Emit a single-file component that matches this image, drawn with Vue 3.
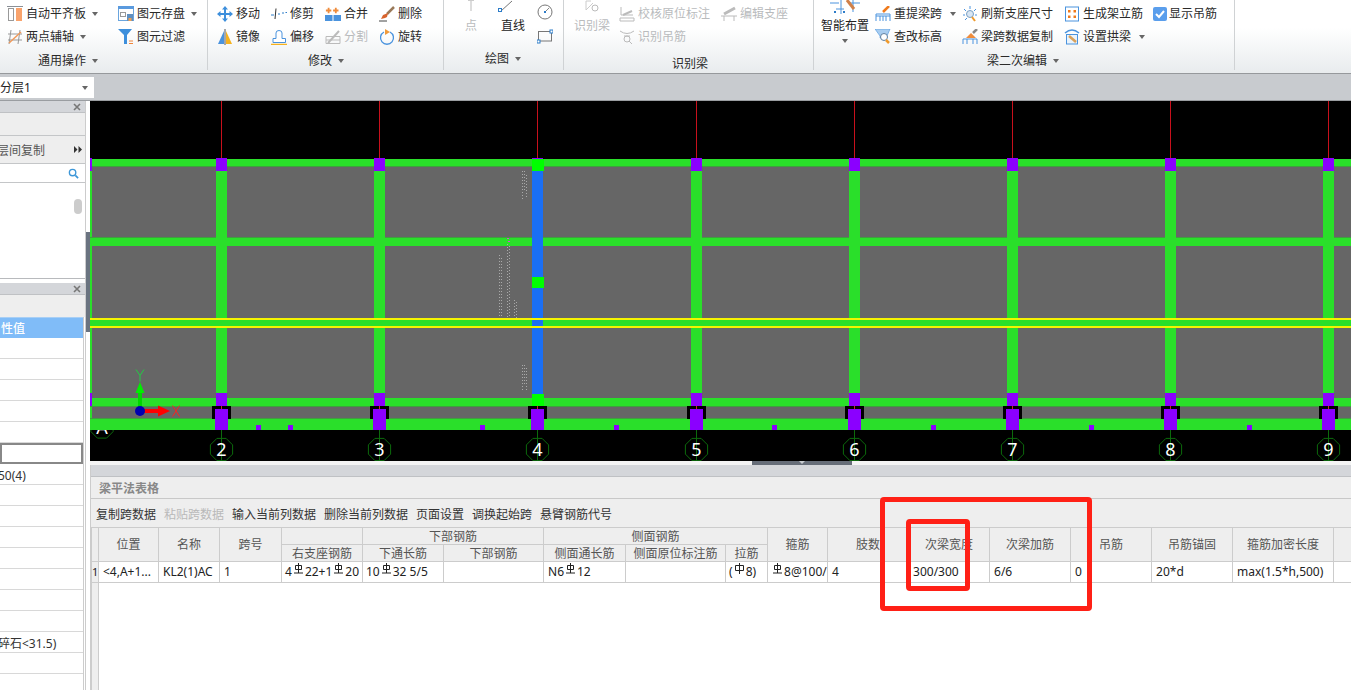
<script setup>
const colLefts = [216, 374, 532, 691, 849, 1007, 1165, 1323]
const specks = [256, 288, 480, 614, 772, 931, 1089, 1247]
const octagon = (cx, cy, r) =>
  Array.from({ length: 8 }, (_, i) => {
    const a = Math.PI / 8 + (i * Math.PI) / 4
    return `${(cx + r * Math.cos(a)).toFixed(1)},${(cy + r * Math.sin(a)).toFixed(1)}`
  }).join(' ')
const axes = colLefts.map((x, i) => ({ x: x + 5.5, label: i + 2, pts: octagon(x + 5.5, 449.5, 12) }))
const sideRows = [
  { t: '' }, { t: '' }, { t: '' }, { t: '' }, { t: '' },
  { t: '', sel: true }, { t: '50(4)' }, { t: '' }, { t: '' }, { t: '' }, { t: '' }, { t: '' }, { t: '' }, { t: '' },
  { t: '碎石<31.5)' }, { t: '' }, { t: '' }
]
const tableTools = [
  { t: '复制跨数据' }, { t: '粘贴跨数据', off: true }, { t: '输入当前列数据' }, { t: '删除当前列数据' },
  { t: '页面设置' }, { t: '调换起始跨' }, { t: '悬臂钢筋代号' }
]
const widths = [7, 60, 61, 62, 81, 81, 100, 82, 100, 42, 60, 81, 81, 81, 81, 81, 101, 18]
</script>

<template>
  <div class="app">
    <header class="ribbon">
      <section class="group g1">
        <div class="rows two">
          <div class="tool"><svg viewBox="0 0 16 16" class="ic"><path d="M0 .5h16" stroke="#8a8f96"/><rect x="1.500" y="2.500" width="5" height="12" fill="#fff" stroke="#999"/><rect x="9" y="2" width="6" height="13" fill="#f9a36c"/></svg><span>自动平齐板</span><i class="arrow"></i></div>
          <div class="tool"><svg viewBox="0 0 16 16" class="ic"><rect x=".5" y=".5" width="15" height="14" fill="#fff" stroke="#6aa5de"/><rect x="0" y="0" width="16" height="3" fill="#5a9ade"/><rect x="2.500" y="6.500" width="5" height="4" fill="none" stroke="#999"/><rect x="9" y="8" width="6" height="7" fill="#5f8fc0"/><rect x="10.500" y="12" width="3" height="3" fill="#f0a050"/></svg><span>图元存盘</span><i class="arrow"></i></div>
          <div class="tool"><svg viewBox="0 0 16 16" class="ic"><path d="M4 1L2 15M13 1L11 15M1 5h14M1 11h14" stroke="#999" fill="none"/><path d="M2 14L14 3" stroke="#f09a5a" stroke-width="1.500"/></svg><span>两点辅轴</span><i class="arrow"></i></div>
          <div class="tool"><svg viewBox="0 0 16 16" class="ic"><path d="M0 0h14L9 6v9l-3 0V6z" fill="#3d8fdc"/><path d="M11 12h4M11 14.500h4" stroke="#f0853a"/></svg><span>图元过滤</span></div>
        </div>
        <div class="label"><span>通用操作</span><i class="arrow"></i></div>
      </section>

      <section class="group g2">
        <div class="rows four">
          <div class="tool"><svg viewBox="0 0 16 16" class="ic"><path d="M8 0l3 3.500H9v3.500h3.500V5L16 8l-3.500 3V9H9v3.500h2L8 16l-3-3.500h2V9H3.500v2L0 8l3.500-3v2H7V3.500H5z" fill="#3d8fdc"/></svg><span>移动</span></div>
          <div class="tool"><svg viewBox="0 0 16 16" class="ic"><path d="M0 9h3M7 8h2M11 7h2M14.500 6.500H16" stroke="#2d7cc8" fill="none"/><path d="M5 2.500L4 13" stroke="#333" fill="none"/></svg><span>修剪</span></div>
          <div class="tool"><svg viewBox="0 0 16 16" class="ic"><rect x="0" y="9" width="7.500" height="6" fill="#4a93de"/><rect x="8.500" y="9" width="7.500" height="6" fill="#4a93de"/><path d="M3 2h2v2h2v2H5v2H3V6H1V4h2zM11 2h2v2h2v2h-2v2h-2V6H9V4h2z" fill="#ef8c3c" transform="scale(.9)"/></svg><span>合并</span></div>
          <div class="tool"><svg viewBox="0 0 16 16" class="ic"><path d="M15 1L8 8" stroke="#9a7a5a" stroke-width="2.500"/><path d="M9 7l-5 2-2 4 4-1 2-1z" fill="#d8632c"/><path d="M0 15h8" stroke="#444"/></svg><span>删除</span></div>
          <div class="tool"><svg viewBox="0 0 16 16" class="ic"><path d="M7 2L1 15h6z" fill="#4a93de"/><path d="M9 2l6 13H9z" fill="#f5b21f"/><path d="M8 0v16" stroke="#555"/></svg><span>镜像</span></div>
          <div class="tool"><svg viewBox="0 0 16 16" class="ic"><path d="M2 13.500V9.500h3V4Q5 1.500 8 1.500T11 4v5.500h3.500v4z" fill="#fff" stroke="#4a93de"/><path d="M0 15.500h16" stroke="#f5b21f" stroke-width="1.500"/></svg><span>偏移</span></div>
          <div class="tool off"><svg viewBox="0 0 16 16" class="ic"><path d="M1 7.500h14v7H1zM1 11h14" fill="none" stroke="#bbb"/><path d="M3 14L14 2" stroke="#bbb" stroke-width="2"/></svg><span>分割</span></div>
          <div class="tool"><svg viewBox="0 0 16 16" class="ic"><path d="M5 3A6.500 6.500 0 1 0 11 3" fill="none" stroke="#4a93de" stroke-width="1.300"/><path d="M6 0v6l5-3z" fill="#f09a3a"/></svg><span>旋转</span></div>
        </div>
        <div class="label"><span>修改</span><i class="arrow"></i></div>
      </section>

      <section class="group g3">
        <div class="draw">
          <div class="big off point"><svg viewBox="0 0 12 12" class="icb"><path d="M6 0v11" stroke="#bbb"/><path d="M3 .5h6" stroke="#ccc"/></svg><span>点</span></div>
          <div class="big line"><svg viewBox="0 0 24 14" class="icw"><path d="M3 11L14 1" stroke="#777" fill="none"/><rect x="0.500" y="8.500" width="3" height="3" fill="#fff" stroke="#2d7cc8"/></svg><span>直线</span></div>
          <div class="shapes">
            <svg viewBox="0 0 16 16" class="ic"><circle cx="8" cy="8" r="7" fill="none" stroke="#777"/><rect x="7" y="7" width="2" height="2" fill="#2d7cc8"/><path d="M9 7l3-3" stroke="#888"/></svg>
            <svg viewBox="0 0 16 16" class="ic"><rect x="1.500" y="3.500" width="13" height="9.500" fill="none" stroke="#777"/><rect x="13" y="2" width="3" height="3" fill="#fff" stroke="#2d7cc8"/><rect x="0" y="12" width="3" height="3" fill="#fff" stroke="#2d7cc8"/></svg>
          </div>
        </div>
        <div class="label"><span>绘图</span><i class="arrow"></i></div>
      </section>

      <section class="group g4">
        <div class="rec">
          <div class="big off recbig"><svg viewBox="0 0 16 12" class="icr"><path d="M2 10V1h5M2 10l7-7" stroke="#ccc" fill="none"/><circle cx="11" cy="8" r="3" fill="none" stroke="#bbb"/></svg><span>识别梁</span></div>
          <div class="rows rec-grid">
            <div class="tool off"><svg viewBox="0 0 16 16" class="ic"><path d="M2 1v8h12M1 12h14v3H1z" fill="none" stroke="#bbb"/><path d="M4 9l9-4" stroke="#bbb" stroke-width="2"/></svg><span>校核原位标注</span></div>
            <div class="tool off"><svg viewBox="0 0 16 16" class="ic"><path d="M0 10h16M3 10v5M13 10v5" stroke="#bbb" fill="none"/><path d="M3 8L14 2" stroke="#bbb" stroke-width="3"/></svg><span>编辑支座</span></div>
            <div class="tool off"><svg viewBox="0 0 16 16" class="ic"><path d="M1 2q7 5 14 0M5 7h6" stroke="#bbb" fill="none"/><circle cx="8" cy="10" r="3" fill="none" stroke="#bbb"/><path d="M10 12l3 3" stroke="#bbb"/></svg><span>识别吊筋</span></div>
          </div>
        </div>
        <div class="label rec-label"><span>识别梁</span></div>
      </section>

      <section class="group g5">
        <div class="second">
          <div class="big smart"><svg viewBox="0 0 30 14" class="ics"><path d="M0 3h9M6 9h8M11 0v14M18 3h12M23 0v12" stroke="#4a93de" fill="none"/><path d="M17 0l7 9" stroke="#d0804a" stroke-width="3"/><rect x="4" y="11" width="2" height="2" fill="#2d7cc8"/><rect x="13" y="11" width="2" height="2" fill="#2d7cc8"/></svg><span>智能布置</span><i class="arrow"></i></div>
          <div class="rows second-grid">
            <div class="tool"><svg viewBox="0 0 16 16" class="ic"><path d="M1 15V8h14v7M1 10h14M5 10v5M8 10v5M11 10v5" stroke="#4a93de" fill="none"/><path d="M8 6l6-6" stroke="#ef7a1c" stroke-width="2.500"/></svg><span>重提梁跨</span><i class="arrow"></i></div>
            <div class="tool"><svg viewBox="0 0 16 16" class="ic"><path d="M8 0v3M2 3l2 2M14 3l-2 2M1 9h2M13 9h2M3 14l2-2" stroke="#4a93de" fill="none"/><circle cx="8" cy="8" r="3.500" fill="#d8e6f4" stroke="#7a9fc2"/><path d="M10 11l3 4" stroke="#ef9a2c" stroke-width="2"/></svg><span>刷新支座尺寸</span></div>
            <div class="tool"><svg viewBox="0 0 16 16" class="ic"><rect x="1.500" y="1" width="13" height="14" fill="#fff" stroke="#4a93de"/><rect x="4" y="4" width="2.500" height="2.500" fill="#ef7a1c"/><rect x="9.500" y="4" width="2.500" height="2.500" fill="#ef7a1c"/><rect x="4" y="9.500" width="2.500" height="2.500" fill="#ef7a1c"/><rect x="9.500" y="9.500" width="2.500" height="2.500" fill="#ef7a1c"/></svg><span>生成架立筋</span></div>
            <div class="tool check"><svg viewBox="0 0 14 14" class="ick"><rect width="14" height="14" rx="2" fill="#5a9eec"/><path d="M3 7l3 3 5-6" stroke="#fff" stroke-width="2" fill="none"/></svg><span>显示吊筋</span></div>
            <div class="tool"><svg viewBox="0 0 16 16" class="ic"><path d="M0 0h15l-3 7v2H5V7z" fill="#a8cdf0" stroke="#4a93de" stroke-width=".6"/><circle cx="9" cy="8" r="3.500" fill="#fff" stroke="#5f7f9f"/><path d="M11 11l3 3" stroke="#ef9a2c" stroke-width="2.500"/></svg><span>查改标高</span></div>
            <div class="tool"><svg viewBox="0 0 16 16" class="ic"><path d="M1 15v-5h14v5M5 10v5M11 10v5" stroke="#4a93de" fill="none"/><path d="M4 9l5-5 5 5z" fill="#ef8c3c"/><path d="M11 4l4-4" stroke="#888" stroke-width="2.500"/></svg><span>梁跨数据复制</span></div>
            <div class="tool"><svg viewBox="0 0 16 16" class="ic"><path d="M1 4Q8-2 15 4" stroke="#4a93de" fill="none" stroke-width="1.500"/><rect x="2.500" y="5.500" width="11" height="9.500" fill="#eaf3fb" stroke="#4a93de"/><path d="M5 7l7 6" stroke="#d8a05a" stroke-width="2.500"/></svg><span>设置拱梁</span><i class="arrow"></i></div>
          </div>
        </div>
        <div class="label second-label"><span>梁二次编辑</span><i class="arrow"></i></div>
      </section>
    </header>

    <div class="strip">
      <div class="combo"><span>分层1</span><i class="arrow"></i></div>
    </div>

    <div class="work">
      <aside class="side">
        <div class="side-head"><svg viewBox="0 0 8 8" class="x"><path d="M1 1l6 6M7 1l-6 6" stroke="#777" stroke-width="1.600"/></svg></div>
        <div class="side-band"></div>
        <div class="side-tools"><span class="clip3">层间复制</span><svg viewBox="0 0 8 7" class="more"><path d="M0 0l3.500 3.500L0 7zM4.500 0L8 3.500 4.500 7z" fill="#333"/></svg></div>
        <div class="side-search">
          <svg viewBox="0 0 12 12" class="glass"><circle cx="5" cy="5" r="3.500" fill="none" stroke="#3d97d8" stroke-width="1.500"/><path d="M8 8l3 3" stroke="#3d97d8" stroke-width="1.800"/></svg>
        </div>
        <div class="side-list"><div class="thumb"></div></div>
        <div class="side-gap"></div>
        <div class="side-head"><svg viewBox="0 0 8 8" class="x"><path d="M1 1l6 6M7 1l-6 6" stroke="#777" stroke-width="1.600"/></svg></div>
        <div class="side-band short"></div>
        <div class="prop-table">
          <div class="prop-head">性值</div>
          <div v-for="(r, i) in sideRows" :key="i" class="prop-row" :class="{ sel: r.sel }"><span>{{ r.t }}</span></div>
        </div>
      </aside>

      <div class="gutter"><div class="knob"></div></div>

      <main class="right">
        <svg class="canvas" viewBox="90 101 1261 360" shape-rendering="crispEdges">
          <rect x="90" y="101" width="1261" height="360" fill="#000"/>
          <g v-for="a in axes" :key="a.label">
            <path :d="`M${a.x} 101V158`" stroke="#c8101c"/>
            <path :d="`M${a.x} 430V461`" stroke="#0c6a0c"/>
            <polygon :points="a.pts" fill="none" stroke="#0c6a0c" shape-rendering="auto"/>
            <text :x="a.x" y="456" class="axis-num" text-anchor="middle">{{ a.label }}</text>
          </g>
          <polygon :points="octagon(102, 427, 12)" fill="none" stroke="#0c6a0c" shape-rendering="auto"/>
          <text x="102" y="434" class="axis-num" text-anchor="middle">A</text>

          <rect x="90" y="159" width="1261" height="271" fill="#666"/>
          <rect x="90" y="159" width="2" height="271" fill="#2adf2a"/>
          <g fill="#2adf2a">
            <rect x="90" y="159" width="1261" height="7"/>
            <rect x="90" y="238" width="1261" height="8"/>
            <rect x="90" y="320" width="1261" height="6"/>
            <rect x="90" y="398" width="1261" height="8"/>
            <rect x="90" y="419" width="1261" height="11"/>
          </g>
          <g fill="#3f9f3f">
            <rect x="90" y="166" width="1261" height="1"/>
            <rect x="90" y="237" width="1261" height="1"/>
            <rect x="90" y="406" width="1261" height="1"/>
            <rect x="90" y="418" width="1261" height="1"/>
          </g>
          <g v-for="x in colLefts" :key="x">
            <rect :x="x" y="159" width="11" height="240" :fill="x === 532 ? '#1a6ff5' : '#2adf2a'"/>
            <template v-if="x !== 532">
              <rect :x="x" y="158" width="11" height="13" fill="#8b00ff"/>
              <rect :x="x" y="393" width="11" height="13" fill="#8b00ff"/>
            </template>
            <template v-else>
              <rect :x="x" y="158" width="11" height="1" fill="#8b00ff"/>
              <rect :x="x" y="159" width="12" height="12" fill="#00ff00"/>
              <rect :x="x" y="277" width="12" height="11" fill="#00ff00"/>
              <rect :x="x" y="394" width="12" height="12" fill="#00ff00"/>
            </template>
            <path :d="`M${x - 4} 419V406H${x + 15}V419H${x + 12}V409H${x - 1}V419Z`" fill="#000"/>
            <rect :x="x - 1" y="409" width="13" height="21" fill="#8b00ff"/>
            <rect :x="x + 5" y="406" width="1" height="3" fill="#d0202a"/>
          </g>
          <rect v-for="s in specks" :key="s" :x="s" y="425" width="5" height="5" fill="#8b00ff"/>
          <rect x="90" y="158" width="2" height="13" fill="#8b00ff"/>
          <rect x="90" y="393" width="2" height="13" fill="#8b00ff"/>
          <rect x="90" y="318" width="1261" height="2" fill="#f4f400"/>
          <rect x="90" y="326" width="1261" height="2" fill="#f4f400"/>

          <g stroke="#aaa" fill="none" stroke-dasharray="1 2">
            <path d="M522.500 171V200M524.500 171V190M526.500 175V198"/>
            <path d="M499.500 255V318M501.500 258V318M507.500 244V318M509.500 246V318M514.500 300V318M516.500 302V318"/>
            <path d="M522.500 365V392M524.500 365V385M526.500 368V390"/>
          </g>
          <path d="M507 238h2M508 241h2" stroke="#e040e0"/>

          <g shape-rendering="auto">
            <rect x="138" y="387" width="4" height="20" fill="#00d800"/>
            <path d="M140 382l4.500 11h-9z" fill="#00ee00"/>
            <rect x="144" y="409" width="15" height="4" fill="#ff0000"/>
            <path d="M170 411l-12 5.500v-11z" fill="#ff0000"/>
            <circle cx="140" cy="411" r="5" fill="#0000b0"/>
            <path d="M136 369.500l4 6 4-6M140 375.500v6" stroke="#22cc44" fill="none"/>
            <path d="M172.500 405.500l7 11M179.500 405.500l-7 11" stroke="#ff2020" fill="none"/>
          </g>
        </svg>

        <div class="splitter"><div class="handle"><i></i></div></div>

        <section class="beam">
          <div class="beam-top"></div>
          <div class="beam-title">梁平法表格</div>
          <div class="beam-tools">
            <span v-for="t in tableTools" :key="t.t" :class="{ dim: t.off }">{{ t.t }}</span>
          </div>
          <table class="grid">
            <colgroup><col v-for="(w, i) in widths" :key="i" :style="{ width: w + 'px' }" /></colgroup>
            <thead>
              <tr>
                <th rowspan="2" class="num"></th>
                <th rowspan="2">位置</th>
                <th rowspan="2">名称</th>
                <th rowspan="2">跨号</th>
                <th></th>
                <th colspan="2">下部钢筋</th>
                <th colspan="3">侧面钢筋</th>
                <th rowspan="2">箍筋</th>
                <th rowspan="2">肢数</th>
                <th rowspan="2">次梁宽度</th>
                <th rowspan="2">次梁加筋</th>
                <th rowspan="2">吊筋</th>
                <th rowspan="2">吊筋锚固</th>
                <th rowspan="2">箍筋加密长度</th>
                <th rowspan="2"></th>
              </tr>
              <tr>
                <th>右支座钢筋</th>
                <th>下通长筋</th>
                <th>下部钢筋</th>
                <th>侧面通长筋</th>
                <th>侧面原位标注筋</th>
                <th>拉筋</th>
              </tr>
            </thead>
            <tbody>
              <tr class="data">
                <td class="num">1</td>
                <td>&lt;4,A+1...</td>
                <td>KL2(1)AC</td>
                <td>1</td>
                <td class="tight">4<svg class="rb" viewBox="0 0 12 12"><path d="M3 2.500h6v4H3zM6 0v10M1.500 10h9" fill="none" stroke="#222"/></svg>22+1<svg class="rb" viewBox="0 0 12 12"><path d="M3 2.500h6v4H3zM6 0v10M1.500 10h9" fill="none" stroke="#222"/></svg>20</td>
                <td class="tight">10<svg class="rb" viewBox="0 0 12 12"><path d="M3 2.500h6v4H3zM6 0v10M1.500 10h9" fill="none" stroke="#222"/></svg>32 5/5</td>
                <td></td>
                <td>N6<svg class="rb" viewBox="0 0 12 12"><path d="M3 2.500h6v4H3zM6 0v10M1.500 10h9" fill="none" stroke="#222"/></svg>12</td>
                <td></td>
                <td class="tight">(<svg class="rb" viewBox="0 0 12 12"><path d="M2 2.500h8v5H2zM6 0v11" fill="none" stroke="#222"/></svg>8)</td>
                <td class="tight"><svg class="rb" viewBox="0 0 12 12"><path d="M3 2.500h6v4H3zM6 0v10M1.500 10h9" fill="none" stroke="#222"/></svg>8@100/</td>
                <td>4</td>
                <td>300/300</td>
                <td>6/6</td>
                <td>0</td>
                <td>20*d</td>
                <td>max(1.5*h,500)</td>
                <td></td>
              </tr>
              <tr class="fill">
                <td class="num"></td>
                <td colspan="17" class="blank"></td>
              </tr>
            </tbody>
          </table>
        </section>
      </main>
    </div>

    <div class="mark outer"></div>
    <div class="mark inner"></div>
  </div>
</template>

<style>
html, body { margin: 0; padding: 0; overflow: hidden; background: #fff; }
</style>

<style scoped>
.app {
  position: relative;
  width: 1351px;
  height: 690px;
  overflow: hidden;
  display: flex;
  flex-direction: column;
  font-family: "Noto Sans", "Noto Sans CJK SC", sans-serif;
  font-size: 12px;
  color: #222;
}
.ribbon {
  height: 73px;
  flex: none;
  display: flex;
  border-bottom: 1px solid #96999c;
  background: linear-gradient(#fff 0, #fff 28px, #e9ecee 72px);
  overflow: hidden;
}
.group {
  flex: none;
  height: 70px;
  box-sizing: border-box;
  border-right: 1px solid #cfd2d4;
  display: flex;
  flex-direction: column;
}
.g1 { width: 208px; }
.g2 { width: 236px; }
.g3 { width: 120px; }
.g4 { width: 250px; }
.g5 { width: 421px; }

.rows {
  display: grid;
  grid-auto-rows: 23px;
  height: 46px;
  padding-top: 2px;
}
.two { grid-template-columns: 111px 1fr; padding-left: 7px; }
.four { grid-template-columns: repeat(4, 54px); padding-left: 9px; }
.tool {
  display: flex;
  align-items: center;
  gap: 3px;
  white-space: nowrap;
  line-height: 16px;
  color: #2a2a2a;
}
.ic { width: 16px; height: 16px; flex: none; }
.off, .off span { color: #b9bbbd; }
.arrow {
  display: inline-block;
  width: 0;
  height: 0;
  margin-left: 3px;
  border-left: 3px solid transparent;
  border-right: 3px solid transparent;
  border-top: 4px solid #666;
}
.label {
  display: flex;
  align-items: center;
  height: 22px;
  padding-top: 2px;
  flex: none;
  line-height: 22px;
  color: #2a2a2a;
}
.label .arrow { margin-left: 6px; }
.g1 .label { padding-left: 38px; }
.g2 .label { padding-left: 100px; }
.g3 .label { padding-left: 41px; }
.rec-label { padding-left: 108px; margin-top: 3px; }
.second-label { padding-left: 173px; }

.big { display: flex; flex-direction: column; align-items: center; line-height: 16px; white-space: nowrap; }
.draw { display: flex; height: 48px; }
.point { margin-left: 21px; width: 12px; }
.icb { width: 12px; height: 12px; margin-bottom: 6px; flex: none; }
.line { margin-left: 24px; width: 24px; margin-right: 12px; }
.icw { width: 24px; height: 14px; margin-left: -6px; margin-bottom: 4px; flex: none; }
.shapes { display: flex; flex-direction: column; gap: 8px; margin-top: 4px; }

.rec { display: flex; height: 48px; padding-left: 10px; }
.recbig { width: 36px; margin-right: 9px; }
.icr { width: 16px; height: 12px; margin-bottom: 6px; flex: none; }
.rec-grid { grid-template-columns: 102px 1fr; }

.second { display: flex; height: 48px; padding-left: 7px; }
.smart { width: 48px; margin-right: 6px; }
.ics { width: 30px; height: 14px; margin-bottom: 4px; flex: none; }
.smart .arrow { margin: 5px 0 0; }
.second-grid { grid-template-columns: 87px 102px 89px 1fr; }
.ick { width: 14px; height: 14px; flex: none; }
.check { gap: 2px; }
.second-grid .tool .arrow { margin-left: 5px; }

.strip {
  flex: none;
  background: #c8cbcf;
  border-bottom: 1px solid #9a9da1;
  display: flex;
  align-items: flex-start;
  padding-top: 3px;
  height: 23px;
}
.combo {
  width: 94px;
  height: 21px;
  background: #fff;
  display: flex;
  align-items: center;
  justify-content: space-between;
  box-sizing: border-box;
  padding-right: 6px;
  line-height: 21px;
}
.work { flex: 1; display: flex; min-height: 0; }
.side {
  width: 85px;
  flex: none;
  background: #fff;
  border-right: 1px solid #ccc;
  overflow: hidden;
  display: flex;
  flex-direction: column;
}
.side-head {
  height: 11px;
  flex: none;
  background: #d4d6da;
  border-bottom: 1px solid #bfc1c4;
  position: relative;
}
.x {
  position: absolute;
  left: 73px;
  top: 2px;
  width: 8px;
  height: 8px;
}
.side-band { height: 22px; flex: none; background: #eee; border-bottom: 1px solid #c4c6c8; }
.side-band.short { height: 22px; border-bottom: none; }
.side-tools {
  height: 27px;
  flex: none;
  background: #eee;
  border-bottom: 1px solid #c4c6c8;
  display: flex;
  align-items: center;
  justify-content: space-between;
  color: #555;
}
.clip3 { margin-left: -3px; }
.more { width: 8px; height: 7px; margin-right: 3px; flex: none; }
.side-search {
  height: 18px;
  flex: none;
  border-bottom: 1px solid #c4c6c8;
  display: flex;
  justify-content: flex-end;
  align-items: center;
  padding-right: 6px;
}
.glass { width: 11px; height: 11px; }
.side-list {
  flex: none;
  border-bottom: 1px solid #b8babd;
  display: flex;
  justify-content: flex-end;
  padding-top: 16px;
  height: 79px;
}
.thumb { width: 8px; height: 15px; border-radius: 4px; background: #ccc; margin-right: 3px; }
.side-gap { height: 4px; flex: none; background: #fff; }
.prop-table { width: 83px; border-right: 1px solid #ccc; flex: 1; }
.prop-head {
  height: 20px;
  background: #80bcf8;
  border-top: 1px solid #a8cff5;
  color: #fff;
  font-weight: 500;
  line-height: 21px;
  padding-left: 1px;
}
.prop-row {
  height: 20px;
  border-bottom: 1px solid #d8d8d8;
  line-height: 24px;
  white-space: nowrap;
  color: #333;
}
.prop-row span { margin-left: -2px; display: inline-block; }
.prop-row.sel { box-sizing: border-box; height: 21px; border: 2px solid #888; }

.gutter { width: 4px; flex: none; background: #fff; padding-top: 131px; box-sizing: border-box; }
.knob { height: 100px; background: #6a7380; }

.right { flex: 1; display: flex; flex-direction: column; min-width: 0; }
.canvas { display: block; width: 1261px; height: 360px; flex: none; }
.axis-num {
  fill: #fff;
  font-family: "Noto Sans", sans-serif;
  font-size: 18px;
}
.splitter { height: 4px; flex: none; background: #f4f4f4; position: relative; }
.handle {
  position: absolute;
  left: 662px;
  top: 0;
  width: 100px;
  height: 4px;
  background: #666d78;
  display: flex;
  justify-content: center;
}
.handle i {
  width: 0;
  height: 0;
  border-left: 3px solid transparent;
  border-right: 3px solid transparent;
  border-top: 3px solid #c8ccd0;
}
.beam {
  flex: 1;
  min-height: 0;
  display: flex;
  flex-direction: column;
  overflow: hidden;
  border-left: 1px solid #ccc;
  background: #fff;
}
.beam-top { height: 11px; flex: none; background: #d4d6da; border-bottom: 1px solid #bfc1c4; }
.beam-title {
  height: 21px;
  flex: none;
  background: #eee;
  border-bottom: 1px solid #c8c8c8;
  line-height: 23px;
  padding-left: 8px;
  color: #888;
  font-weight: 700;
}
.beam-tools {
  height: 28px;
  flex: none;
  box-sizing: border-box;
  background: #eee;
  display: flex;
  gap: 8px;
  align-items: center;
  padding-left: 5px;
  padding-top: 1px;
  white-space: nowrap;
  color: #333;
}
.dim { color: #b9b9b9; }
.grid {
  table-layout: fixed;
  border-collapse: collapse;
  width: 1260px;
  flex: none;
}
.grid th, .grid td {
  border: 1px solid #ccc;
  padding: 0;
  overflow: hidden;
  white-space: nowrap;
}
.grid th {
  background: #eee;
  font-weight: 400;
  color: #555;
  line-height: 15px;
  height: 16px;
  text-align: center;
}
.grid td { height: 20px; line-height: 20px; padding-left: 4px; color: #222; }
.grid td.tight { padding-left: 3px; }
.grid th.num, .grid td.num { background: #eee; padding: 0; text-align: center; font-size: 11px; }
.grid .fill td { height: 108px; border-bottom: none; }
.grid .fill .blank { background: #fff; border: none; border-left: 1px solid #ccc; }
.rb { width: 13px; height: 12px; vertical-align: 1px; }

.mark {
  position: absolute;
  box-sizing: border-box;
  border: 5px solid #ff2016;
  border-radius: 4px;
  pointer-events: none;
}
.outer { left: 880px; top: 497px; width: 212px; height: 114px; }
.inner { left: 906px; top: 519px; width: 64px; height: 72px; }
</style>
